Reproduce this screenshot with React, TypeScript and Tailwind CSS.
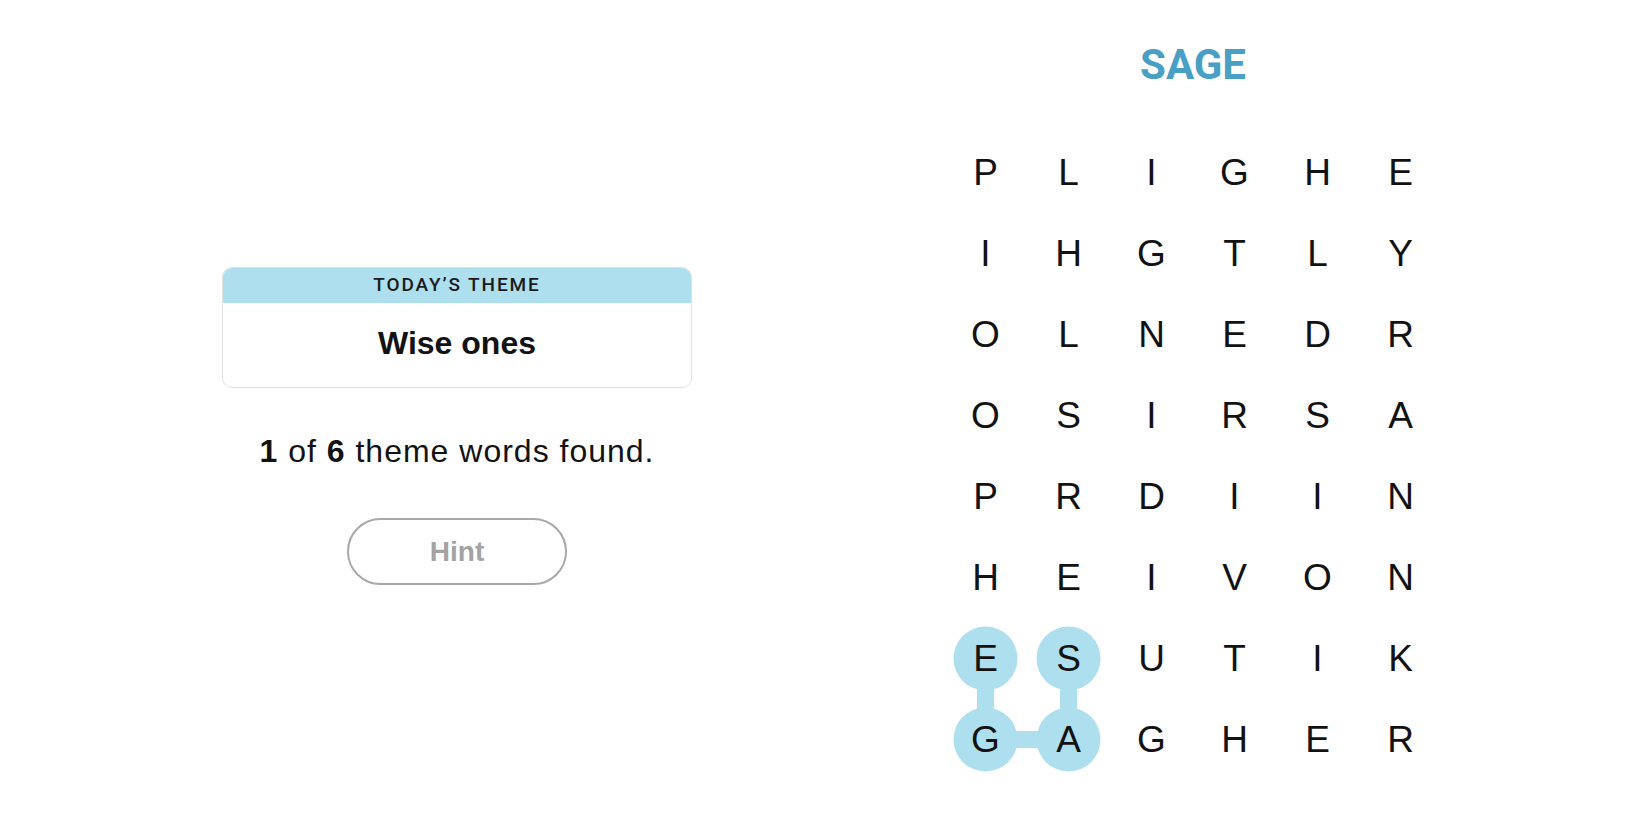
import React from "react";

const GRID = [
  "PLIGHE",
  "IHGTLY",
  "OLNEDR",
  "OSIRSA",
  "PRDIIN",
  "HEIVON",
  "ESUTIK",
  "GAGHER",
];

const CW = 83;
const RH = 81;
const cx = (c: number) => CW / 2 + CW * c;
const cy = (r: number) => RH / 2 + RH * r;

export default function App() {
  const hl = [
    [6, 0],
    [6, 1],
    [7, 0],
    [7, 1],
  ];
  const lines = [
    [6, 0, 7, 0],
    [6, 1, 7, 1],
    [7, 0, 7, 1],
  ];
  return (
    <div
      className="flex w-full h-[825px] bg-white pl-[222px] text-[#121212] overflow-hidden"
      style={{ fontFamily: '"Liberation Sans", Arial, sans-serif' }}
    >
      <div className="w-[470px] pt-[267px] flex flex-col items-center shrink-0">
        <div className="w-full rounded-[10px] border border-[#e2e2e2] overflow-hidden">
          <div className="h-[35px] bg-[#aedfee] flex items-center justify-center">
            <span className="text-[19px] font-medium tracking-[0.1em] text-[#1a1a1a] font-['Roboto',sans-serif]">
              TODAY’S THEME
            </span>
          </div>
          <div className="h-[84px] flex items-center justify-center pb-[4px]">
            <span className="text-[32px] font-bold leading-none">Wise ones</span>
          </div>
        </div>
        <p className="mt-[43px] h-[40px] leading-[40px] text-[32px] tracking-[1px]">
          <b>1</b> of <b>6</b> theme words found.
        </p>
        <button className="mt-[47px] w-[220px] h-[67px] rounded-full border-2 border-[#a8a8a8] text-[28px] font-bold text-[#a3a3a3] flex items-center justify-center">
          Hint
        </button>
      </div>
      <div className="ml-[252px] w-[498px] flex flex-col shrink-0">
        <div className="mt-[40px] h-[50px] leading-[50px] text-center text-[42px] font-bold text-[#4a9fc4] font-['Roboto',sans-serif]">
          SAGE
        </div>
        <div className="relative mt-[42px] w-[498px] h-[648px]">
          <svg className="absolute inset-0" width={498} height={648}>
            {lines.map(([r1, c1, r2, c2], i) => (
              <line
                key={i}
                x1={cx(c1)}
                y1={cy(r1)}
                x2={cx(c2)}
                y2={cy(r2)}
                stroke="#aedfee"
                strokeWidth={17}
              />
            ))}
            {hl.map(([r, c], i) => (
              <circle key={i} cx={cx(c)} cy={cy(r)} r={32} fill="#aedfee" />
            ))}
          </svg>
          <div className="relative grid grid-cols-[repeat(6,83px)] grid-rows-[repeat(8,81px)]">
            {GRID.flatMap((row, r) =>
              row.split("").map((ch, c) => (
                <div
                  key={`${r}-${c}`}
                  className="flex items-center justify-center text-[37px] leading-none text-[#121212]"
                >
                  {ch}
                </div>
              ))
            )}
          </div>
        </div>
      </div>
    </div>
  );
}
